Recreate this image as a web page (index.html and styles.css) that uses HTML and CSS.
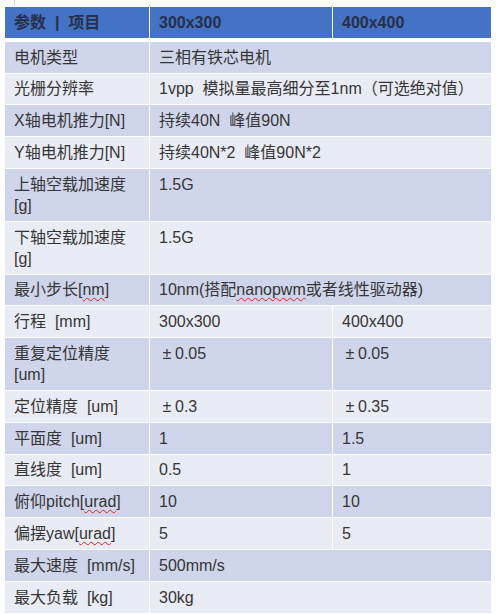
FILE: index.html
```html
<!DOCTYPE html>
<html lang="zh-CN">
<head>
<meta charset="utf-8">
<title>参数表</title>
<link rel="stylesheet" href="styles.css">
</head>
<body>
<div class="mark"></div>
<table class="spec">
  <colgroup>
    <col class="w1"><col class="w2"><col class="w3">
  </colgroup>
  <thead>
    <tr><th>参数&nbsp; |&nbsp; 项目</th><th>300x300</th><th>400x400</th></tr>
  </thead>
  <tbody>
    <tr class="odd"><td>电机类型</td><td colspan="2">三相有铁芯电机</td></tr>
    <tr class="even"><td>光栅分辨率</td><td colspan="2">1vpp&nbsp; 模拟量最高细分至1nm（可选绝对值）</td></tr>
    <tr class="odd"><td>X轴电机推力[N]</td><td colspan="2">持续40N&nbsp; 峰值90N</td></tr>
    <tr class="even"><td>Y轴电机推力[N]</td><td colspan="2">持续40N*2&nbsp; 峰值90N*2</td></tr>
    <tr class="odd"><td>上轴空载加速度 [g]</td><td colspan="2">1.5G</td></tr>
    <tr class="even"><td>下轴空载加速度 [g]</td><td colspan="2">1.5G</td></tr>
    <tr class="odd"><td>最小步长[<span class="sp">nm</span>]</td><td colspan="2">10nm(搭配<span class="sp">nanopwm</span>或者线性驱动器)</td></tr>
    <tr class="even"><td>行程&nbsp; [mm]</td><td>300x300</td><td>400x400</td></tr>
    <tr class="odd"><td>重复定位精度 [um]</td><td><span class="pm">±</span>0.05</td><td><span class="pm">±</span>0.05</td></tr>
    <tr class="even"><td>定位精度&nbsp; [um]</td><td><span class="pm">±</span>0.3</td><td><span class="pm">±</span>0.35</td></tr>
    <tr class="odd"><td>平面度&nbsp; [um]</td><td>1</td><td>1.5</td></tr>
    <tr class="even"><td>直线度&nbsp; [um]</td><td>0.5</td><td>1</td></tr>
    <tr class="odd"><td>俯仰pitch[<span class="sp">urad</span>]</td><td>10</td><td>10</td></tr>
    <tr class="even"><td>偏摆yaw[<span class="sp">urad</span>]</td><td>5</td><td>5</td></tr>
    <tr class="odd"><td>最大速度&nbsp; [mm/s]</td><td colspan="2">500mm/s</td></tr>
    <tr class="even"><td>最大负载&nbsp; [kg]</td><td colspan="2">30kg</td></tr>
  </tbody>
</table>
</body>
</html>
```
FILE: styles.css
```css
html, body {
  margin: 0;
  padding: 0;
  background: #ffffff;
}

body {
  font-family: "Liberation Sans", Arial, "Noto Sans CJK SC", sans-serif;
  font-size: 16px;
  color: #363636;
}

.mark {
  width: 1px;
  height: 6px;
  margin-left: 14px;
  background: #d4d4d4;
}

.spec {
  margin: 1px 0 0 5px;
  width: 487px;
  table-layout: fixed;
  border-collapse: separate;
  border-spacing: 0;
}

.w1 { width: 145px; }
.w2 { width: 183px; }
.w3 { width: 159px; }

.spec th,
.spec td {
  box-sizing: border-box;
  padding: 4.8px 9px 5px;
  line-height: 21px;
  text-align: left;
  vertical-align: top;
  border-right: 1px solid #ffffff;
  border-bottom: 1px solid #ffffff;
}

.spec th {
  background: #4472c4;
  color: #27304a;
  font-weight: bold;
  border-bottom: 4px solid #ffffff;
}

.spec tr.odd td { background: #cfd5ea; }
.spec tr.even td { background: #e9ebf5; }

.sp {
  text-decoration: underline wavy #e02020;
  text-decoration-thickness: 1px;
  text-underline-offset: 2px;
  text-decoration-skip-ink: none;
}

.pm {
  display: inline-block;
  width: 16px;
  text-align: center;
}
```
